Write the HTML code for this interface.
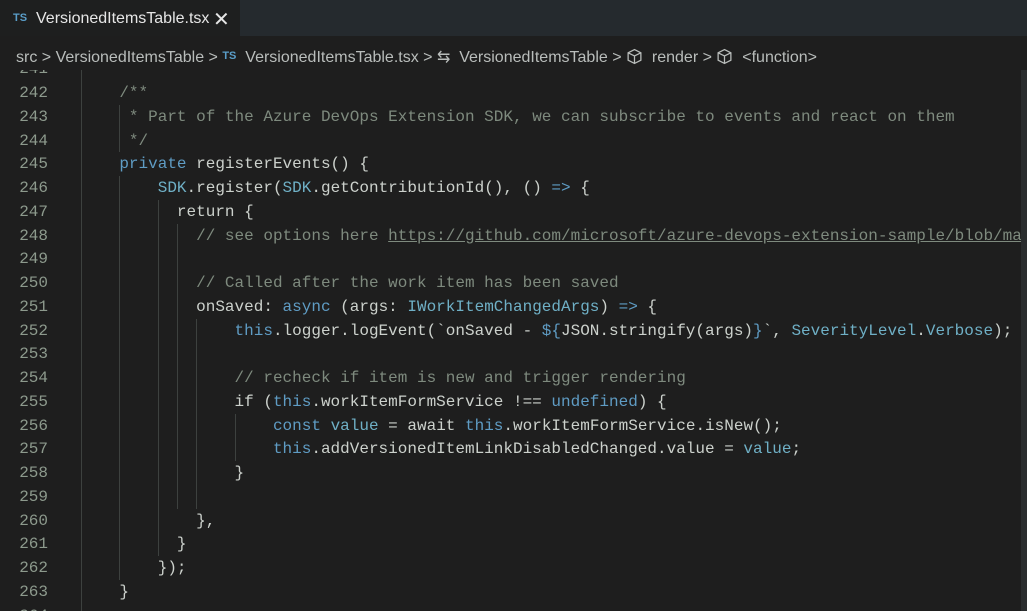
<!DOCTYPE html>
<html><head><meta charset="utf-8"><style>
html,body{margin:0;padding:0;width:1027px;height:611px;overflow:hidden;background:#1e1e1e;}
body{position:relative;font-family:"Liberation Sans",sans-serif;}
.tabbar{position:absolute;left:0;top:0;width:1027px;height:36px;background:#252a2e;}
.tab{position:absolute;left:0;top:0;width:240px;height:36px;background:#1e1f1f;color:#e6e6e6;font-size:16px;}
.tab .ts{position:absolute;left:13px;top:12px;font-size:11px;font-weight:bold;color:#5a9ec9;}
.tab .nm{position:absolute;left:36px;top:10px;}
.tab .x{position:absolute;left:213px;top:7px;font-size:20px;color:#e6e6e6;}
.bc{position:absolute;left:16px;top:47px;font-size:16px;color:#b9bdbb;white-space:pre;}
.bc .ts{font-size:11px;font-weight:bold;color:#5a9ec9;vertical-align:3px;}
.code{position:absolute;left:0;top:0;font-family:"Liberation Mono",monospace;font-size:16px;}
.ln{position:absolute;width:48px;text-align:right;color:#8d9a8d;font-size:16px;font-family:"Liberation Mono",monospace;}
.l{position:absolute;left:42.5px;white-space:pre;color:#ccd1cc;}
.g{position:absolute;width:1px;background:#3d413f;}
.c{color:#7e8a7e}.k{color:#5f9cc4}.t{color:#6fb0c6}.u{text-decoration:underline;color:#7e8a7e}
</style></head><body>
<div class="code" id="code">
</div>
<div class="tabbar"><div class="tab"><span class="ts">TS</span><span class="nm">VersionedItemsTable.tsx</span><span class="x">✕</span></div></div>
<div style="position:absolute;left:0;top:36px;width:1027px;height:34px;background:#1e1e1e"></div>
<div class="bc">src &gt; VersionedItemsTable &gt; <span class="ts">TS</span>  VersionedItemsTable.tsx &gt; <span style="color:#b9bdbb">⇆</span>  VersionedItemsTable &gt; <svg width="17" height="17" viewBox="0 0 16 16" style="vertical-align:-3px"><path d="M8 1.5L14 4.5V11.5L8 14.5L2 11.5V4.5ZM2 4.5L8 7.5L14 4.5M8 7.5V14.5" fill="none" stroke="#b9bdbb" stroke-width="1.2"/></svg>  render &gt; <svg width="17" height="17" viewBox="0 0 16 16" style="vertical-align:-3px"><path d="M8 1.5L14 4.5V11.5L8 14.5L2 11.5V4.5ZM2 4.5L8 7.5L14 4.5M8 7.5V14.5" fill="none" stroke="#b9bdbb" stroke-width="1.2"/></svg>  &lt;function&gt;</div>
<div style="position:absolute;left:1021px;top:70px;width:6px;height:541px;background:#2a2d2e"></div>
<script>
var lines=[
[241,'',[81]],
[242,'        <span class="c">/**</span>',[81]],
[243,'         <span class="c">* Part of the Azure DevOps Extension SDK, we can subscribe to events and react on them</span>',[81,119]],
[244,'         <span class="c">*/</span>',[81,119]],
[245,'        <span class="k">private</span> registerEvents() {',[81]],
[246,'            <span class="t">SDK</span>.register(<span class="t">SDK</span>.getContributionId(), () <span class="k">=&gt;</span> {',[81,119]],
[247,'              return {',[81,119,158]],
[248,'                <span class="c">// see options here </span><span class="u">https://github.com/microsoft/azure-devops-extension-sample/blob/mas</span>',[81,119,158,177]],
[249,'',[81,119,158,177]],
[250,'                <span class="c">// Called after the work item has been saved</span>',[81,119,158,177]],
[251,'                onSaved: <span class="k">async</span> (args: <span class="t">IWorkItemChangedArgs</span>) <span class="k">=&gt;</span> {',[81,119,158,177]],
[252,'                    <span class="k">this</span>.logger.logEvent(`onSaved - <span class="k">${</span>JSON.stringify(args)<span class="k">}</span>`, <span class="t">SeverityLevel</span>.<span class="t">Verbose</span>);',[81,119,158,177,196]],
[253,'',[81,119,158,177,196]],
[254,'                    <span class="c">// recheck if item is new and trigger rendering</span>',[81,119,158,177,196]],
[255,'                    if (<span class="k">this</span>.workItemFormService !== <span class="k">undefined</span>) {',[81,119,158,177,196]],
[256,'                        <span class="k">const</span> <span class="t">value</span> = await <span class="k">this</span>.workItemFormService.isNew();',[81,119,158,177,196,235]],
[257,'                        <span class="k">this</span>.addVersionedItemLinkDisabledChanged.value = <span class="t">value</span>;',[81,119,158,177,196,235]],
[258,'                    }',[81,119,158,177,196]],
[259,'',[81,119,158,177,196]],
[260,'                },',[81,119,158]],
[261,'              }',[81,119,158]],
[262,'            });',[81,119]],
[263,'        }',[81]],
[264,'',[81]]];
var h='';
lines.forEach(function(a){var top=81+(a[0]-242)*23.76;
h+='<div class="ln" style="left:0;top:'+(top+3)+'px">'+a[0]+'</div>';
a[2].forEach(function(x){h+='<div class="g" style="left:'+x+'px;top:'+top+'px;height:23.8px"></div>';});
h+='<div class="l" style="top:'+(top+3)+'px">'+a[1]+'</div>';});
document.getElementById('code').innerHTML=h;
</script>
</body></html>
